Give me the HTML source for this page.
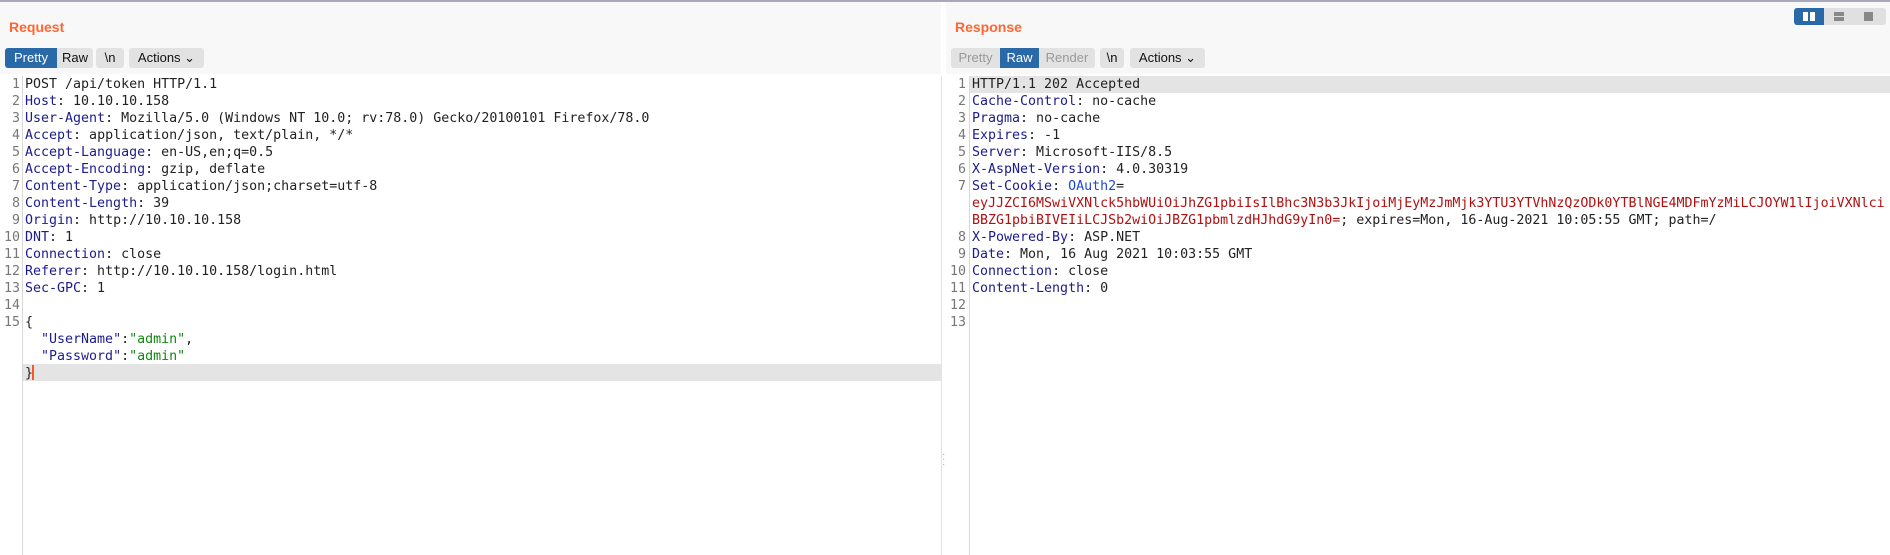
<!DOCTYPE html>
<html><head><meta charset="utf-8"><style>
body{margin:0;width:1890px;height:555px;background:#fff;position:relative;overflow:hidden;font-family:"Liberation Sans",sans-serif}
.topline{position:absolute;left:0;top:0;width:1890px;height:2px;background:#a8a8bc}
.hdr{position:absolute;top:2px;height:72px;background:#f8f8f8}
.title{position:absolute;top:19px;font-size:14px;font-weight:bold;color:#ff6633}
.btn{position:absolute;top:48px;height:20px;line-height:20px;font-size:13px;text-align:center;background:#e2e2e2;color:#111;border-radius:3px}
.on{background:#2a69a8;color:#fff}
.dis{color:#999}
.code{position:absolute;top:76px;font-family:"DejaVu Sans Mono","Liberation Mono",monospace;font-size:13.3px;line-height:17px;white-space:pre;color:#222}
.ln{position:absolute;top:76px;font-family:"DejaVu Sans Mono",monospace;font-size:13.3px;line-height:17px;color:#777;text-align:right;white-space:pre}
.k{color:#1c1c8c}.r{color:#b01010}.g{color:#118811}
.vl{position:absolute;top:76px;width:1px;height:479px;background:#d8d8d8}
.hl{position:absolute;height:17px;background:#e4e4e4}
</style></head><body>
<div class="topline"></div>
<div class="hdr" style="left:0;width:941px"></div>
<div class="hdr" style="left:946px;width:944px"></div>
<div class="title" style="left:9px">Request</div>
<div class="title" style="left:955px">Response</div>
<div class="btn on" style="left:5px;width:52px;border-radius:3px 0 0 3px">Pretty</div>
<div class="btn" style="left:57px;width:36px;border-radius:0 3px 3px 0">Raw</div>
<div class="btn" style="left:96px;width:28px">\n</div>
<div class="btn" style="left:129px;width:75px">Actions &#8964;</div>
<div class="btn dis" style="left:951px;width:49px;border-radius:3px 0 0 3px">Pretty</div>
<div class="btn on" style="left:1000px;width:39px;border-radius:0">Raw</div>
<div class="btn dis" style="left:1039px;width:56px;border-radius:0 3px 3px 0">Render</div>
<div class="btn" style="left:1100px;width:24px">\n</div>
<div class="btn" style="left:1130px;width:75px">Actions &#8964;</div>
<div style="position:absolute;left:1794px;top:8px;width:92px;height:17px;background:#e0e0e0;border-radius:3px"></div>
<div style="position:absolute;left:1794px;top:8px;width:30px;height:17px;background:#2a69a8;border-radius:3px 0 0 3px"></div>
<div style="position:absolute;left:1803px;top:12px;width:5px;height:9px;background:#fff"></div>
<div style="position:absolute;left:1810px;top:12px;width:5px;height:9px;background:#fff"></div>
<div style="position:absolute;left:1834px;top:12px;width:10px;height:4px;background:#888"></div>
<div style="position:absolute;left:1834px;top:17px;width:10px;height:4px;background:#888"></div>
<div style="position:absolute;left:1864px;top:12px;width:9px;height:9px;background:#888"></div>

<div class="vl" style="left:22px"></div>
<div class="vl" style="left:941px;background:#e4e4e4"></div>
<div class="vl" style="left:969px"></div>
<div class="hl" style="left:23px;top:364px;width:918px"></div>
<div class="hl" style="left:970px;top:76px;width:920px"></div>
<div style="position:absolute;left:32px;top:365px;width:2px;height:15px;background:#ff5522"></div>
<div style="position:absolute;left:942px;top:452px;color:#aaa;font-size:10px;line-height:5px">·<br>·<br>·</div>

<div class="ln" style="left:0;width:20px">1
2
3
4
5
6
7
8
9
10
11
12
13
14
15</div>
<div class="code" style="left:25px"><span>POST /api/token HTTP/1.1</span>
<span class="k">Host</span>: 10.10.10.158
<span class="k">User-Agent</span>: Mozilla/5.0 (Windows NT 10.0; rv:78.0) Gecko/20100101 Firefox/78.0
<span class="k">Accept</span>: application/json, text/plain, */*
<span class="k">Accept-Language</span>: en-US,en;q=0.5
<span class="k">Accept-Encoding</span>: gzip, deflate
<span class="k">Content-Type</span>: application/json;charset=utf-8
<span class="k">Content-Length</span>: 39
<span class="k">Origin</span>: http://10.10.10.158
<span class="k">DNT</span>: 1
<span class="k">Connection</span>: close
<span class="k">Referer</span>: http://10.10.10.158/login.html
<span class="k">Sec-GPC</span>: 1

{
  <span class="k">"UserName"</span>:<span class="g">"admin"</span>,
  <span class="k">"Password"</span>:<span class="g">"admin"</span>
}</div>

<div class="ln" style="left:946px;width:20px">1
2
3
4
5
6
7


8
9
10
11
12
13</div>
<div class="code" style="left:972px">HTTP/1.1 202 Accepted
<span class="k">Cache-Control</span>: no-cache
<span class="k">Pragma</span>: no-cache
<span class="k">Expires</span>: -1
<span class="k">Server</span>: Microsoft-IIS/8.5
<span class="k">X-AspNet-Version</span>: 4.0.30319
<span class="k">Set-Cookie</span>: <span style="color:#1c4cc8">OAuth2</span>=
<span class="r">eyJJZCI6MSwiVXNlck5hbWUiOiJhZG1pbiIsIlBhc3N3b3JkIjoiMjEyMzJmMjk3YTU3YTVhNzQzODk0YTBlNGE4MDFmYzMiLCJOYW1lIjoiVXNlci</span>
<span class="r">BBZG1pbiBIVEIiLCJSb2wiOiJBZG1pbmlzdHJhdG9yIn0=</span>; expires=Mon, 16-Aug-2021 10:05:55 GMT; path=/
<span class="k">X-Powered-By</span>: ASP.NET
<span class="k">Date</span>: Mon, 16 Aug 2021 10:03:55 GMT
<span class="k">Connection</span>: close
<span class="k">Content-Length</span>: 0</div>
</body></html>
